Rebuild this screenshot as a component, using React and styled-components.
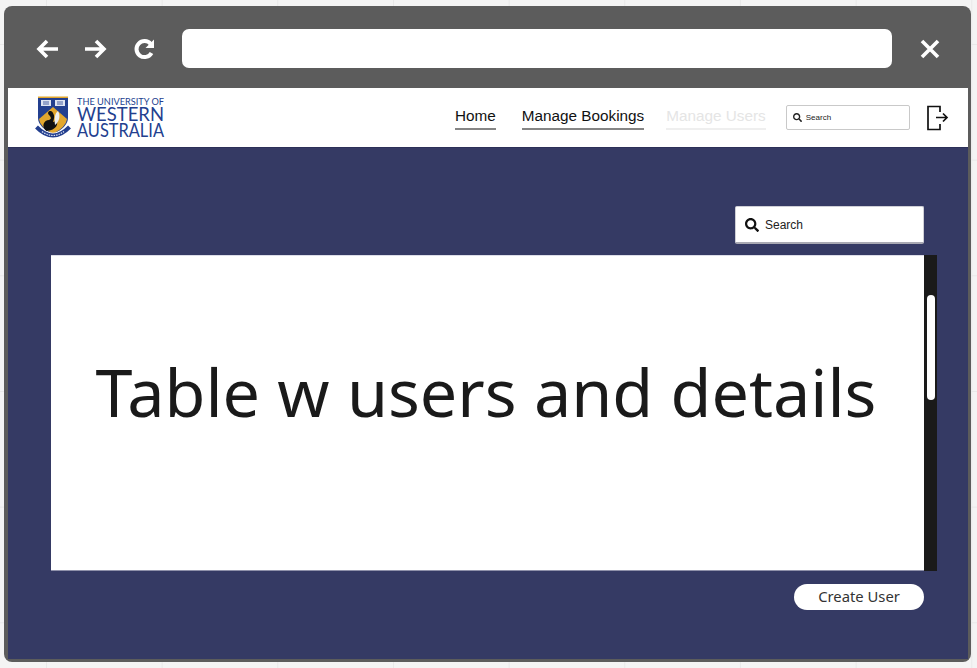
import React from 'react';
import styled, { createGlobalStyle } from 'styled-components';
import { FaSearch } from 'react-icons/fa';

const Colors = {
  frame: '#5c5c5c',
  navy: '#353a64',
  ink: '#1a1a1a',
  crest: '#233f8f',
  gold: '#e2a72e',
};

const GlobalStyle = createGlobalStyle`
  html, body {
    margin: 0;
    padding: 0;
    height: 668px;
    overflow: hidden;
    font-family: "Liberation Sans", Arial, sans-serif;
    background-color: #f4f4f4;
    background-image:
      linear-gradient(to right, #e9e9e9 1px, transparent 1px),
      linear-gradient(to bottom, #e9e9e9 1px, transparent 1px);
    background-size: 115.67px 115.67px;
    background-position: 46px 44px;
  }
`;

const Window = styled.div`
  box-sizing: border-box;
  display: flex;
  flex-direction: column;
  width: 967px;
  height: 656px;
  margin: 6px 0 0 4px;
  padding: 0 3px 3px 4px;
  background: ${Colors.frame};
  border-radius: 8px;
`;

const BrowserBar = styled.div`
  box-sizing: border-box;
  display: flex;
  flex: 0 0 82px;
  align-items: center;
  padding: 3px 0 0 28px;
`;

const BarButton = styled.button`
  display: flex;
  align-items: center;
  justify-content: center;
  width: 22px;
  height: 22px;
  margin-right: ${(props) => props.$gap}px;
  padding: 0;
  border: 0;
  background: none;
`;

const AddressBar = styled.div`
  flex: 0 0 710px;
  height: 39px;
  background: #fff;
  border-radius: 7px;
`;

const CloseButton = styled(BarButton)`
  margin: 0 0 0 27px;
`;

const SiteHeader = styled.header`
  display: flex;
  flex: 0 0 59px;
  align-items: center;
  padding-left: 27px;
  background: #fff;
  border-bottom: 1px solid #2c3058;
`;

const Logo = styled.svg`
  display: block;
  width: 171px;
  height: 59px;
  margin-right: 249px;
`;

const NavList = styled.nav`
  display: flex;
  align-items: flex-start;
`;

const NavItem = styled.a`
  height: 22px;
  margin-right: ${(props) => props.$gap}px;
  border-bottom: 2px solid ${(props) => (props.$disabled ? '#efefef' : '#858585')};
  color: ${(props) => (props.$disabled ? '#e5e5e5' : '#111')};
  font-size: 15.3px;
  line-height: 20px;
  white-space: nowrap;
`;

const SmallSearch = styled.div`
  box-sizing: border-box;
  display: flex;
  align-items: center;
  width: 124px;
  height: 25px;
  margin-left: 20px;
  padding-left: 6px;
  border: 1px solid #c9c9c9;
  border-radius: 2px;
  color: #222;
  font-size: 8px;

  svg {
    width: 9px;
    height: 9px;
    margin-right: 4px;
  }
`;

const LogoutIcon = styled.svg`
  display: block;
  width: 22px;
  height: 26px;
  margin-left: 17px;
`;

const Content = styled.main`
  display: flex;
  flex: 1;
  flex-direction: column;
  padding: 58px 31px 0 43px;
  background: ${Colors.navy};
`;

const SearchRow = styled.div`
  display: flex;
  justify-content: flex-end;
  padding-right: 13px;
`;

const SearchBox = styled.div`
  box-sizing: border-box;
  display: flex;
  align-items: center;
  width: 189px;
  height: 38px;
  padding-left: 9px;
  background: #fff;
  border: 1px solid #cfcfd6;
  border-bottom: 2px solid #a9a9b3;
  border-radius: 2px;
  color: #222;
  font-size: 12px;

  svg {
    width: 14px;
    height: 14px;
    margin-right: 6px;
    color: #111;
  }
`;

const TablePanel = styled.section`
  display: flex;
  height: 316px;
  margin-top: 11px;
`;

const TableBody = styled.div`
  box-sizing: border-box;
  display: flex;
  flex: 1;
  align-items: center;
  justify-content: center;
  padding: 0 3px 44px 0;
  background: #fff;
  border-top: 1px solid #dcdde8;
  border-bottom: 1px solid #8f91aa;
  color: ${Colors.ink};
  font-family: "Noto Sans", "Open Sans", sans-serif;
  font-size: 66.5px;
  white-space: nowrap;
`;

const ScrollTrack = styled.div`
  position: relative;
  flex: 0 0 13px;
  background: ${Colors.ink};
`;

const ScrollThumb = styled.div`
  position: absolute;
  top: 40px;
  left: 3px;
  width: 8px;
  height: 105px;
  background: #fff;
  border-radius: 4px;
`;

const ActionRow = styled.div`
  display: flex;
  justify-content: flex-end;
  margin-top: 13px;
  padding-right: 13px;
`;

const CreateButton = styled.button`
  width: 130px;
  height: 26px;
  padding: 0 0 2px;
  background: #fff;
  border: 0;
  border-radius: 13px;
  color: #333;
  font-family: "Noto Sans", "Open Sans", sans-serif;
  font-size: 14.8px;
`;

const Arrow = ({ flip }) => (
  <svg width="22" height="22" viewBox="0 0 22 22" fill="none" stroke="#fff" strokeWidth="3.6">
    <g transform={flip ? 'matrix(-1 0 0 1 22 0)' : undefined}>
      <path d="M3 11h19M11 3l-8 8 8 8" />
    </g>
  </svg>
);

const Crest = () => (
  <g transform="translate(0 6)">
    <path d="M3 3h30v21q0 9-15 16Q3 33 3 24z" fill={Colors.crest} />
    <rect x="3" y="2.500" width="30" height="1.500" fill={Colors.gold} />
    <path d="M18 13l14 12q-1 8-14 15Q5 33 4 25z" fill={Colors.gold} />
    <path d="M6 6h10v6H6zM20 6h10v6H20z" fill="#dfe4f2" />
    <path d="M8 8h6M8 10h6M22 8h6M22 10h6" stroke={Colors.crest} strokeWidth="0.800" />
    <path d="M11 37c-5-5-2-11 3-11 3-1 2-3 0-5-3-3 2-6 4-2 2 3 1 6 0 9 2 0 3-2 3-4 3 6 1 12-10 13z" fill="#111" />
    <path d="M20 31c-1-7 0-12 3-14 3 5 1 11-3 14z" fill="#eee" />
    <path d="M1.500 33q16.500 17 33 0" fill="none" stroke="#fff" strokeWidth="5.500" />
    <path d="M1.500 33q16.500 17 33 0" fill="none" stroke={Colors.crest} strokeWidth="4" />
    <path d="M7 37.500q11 8 22 0" fill="none" stroke="#dfe4f2" strokeWidth="1.200" strokeDasharray="1.500 1" />
  </g>
);

const App = () => {
  return (
    <>
      <GlobalStyle />
      <Window>
        <BrowserBar>
          <BarButton $gap={27}>
            <Arrow />
          </BarButton>
          <BarButton $gap={27}>
            <Arrow flip />
          </BarButton>
          <BarButton $gap={26}>
            <svg width="22" height="22" viewBox="0 0 22 22" fill="none" stroke="#fff" strokeWidth="4">
              <path d="M17.500 15a8 8 0 1 1-.8-9" />
              <path d="M20 1.500v8.500h-8.500z" fill="#fff" stroke="none" />
            </svg>
          </BarButton>
          <AddressBar />
          <CloseButton>
            <svg width="20" height="20" viewBox="0 0 20 20" stroke="#fff" strokeWidth="3.6">
              <path d="M2 2l16 16M18 2L2 18" />
            </svg>
          </CloseButton>
        </BrowserBar>

        <SiteHeader>
          <Logo viewBox="0 0 171 59">
            <Crest />
            <g fill={Colors.crest} fontFamily="Lato, 'Liberation Sans', sans-serif">
              <text x="42" y="17" fontSize="9.500" textLength="87" lengthAdjust="spacingAndGlyphs">THE UNIVERSITY OF</text>
              <text x="42" y="33" fontSize="19.500" textLength="87" lengthAdjust="spacingAndGlyphs">WESTERN</text>
              <text x="42" y="49" fontSize="19.500" textLength="87" lengthAdjust="spacingAndGlyphs">AUSTRALIA</text>
            </g>
          </Logo>
          <NavList>
            <NavItem $gap={26}>Home</NavItem>
            <NavItem $gap={22}>Manage Bookings</NavItem>
            <NavItem $gap={0} $disabled>Manage Users</NavItem>
          </NavList>
          <SmallSearch>
            <FaSearch />
            Search
          </SmallSearch>
          <LogoutIcon viewBox="0 0 22 26" fill="none" stroke="#111" strokeWidth="1.700">
            <path d="M13 7V1.500H1v23h12V19M9 12.500h11M16 8.500l4 4-4 4" />
          </LogoutIcon>
        </SiteHeader>

        <Content>
          <SearchRow>
            <SearchBox>
              <FaSearch />
              Search
            </SearchBox>
          </SearchRow>
          <TablePanel>
            <TableBody>Table w users and details</TableBody>
            <ScrollTrack>
              <ScrollThumb />
            </ScrollTrack>
          </TablePanel>
          <ActionRow>
            <CreateButton>Create User</CreateButton>
          </ActionRow>
        </Content>
      </Window>
    </>
  );
};

export default App;
